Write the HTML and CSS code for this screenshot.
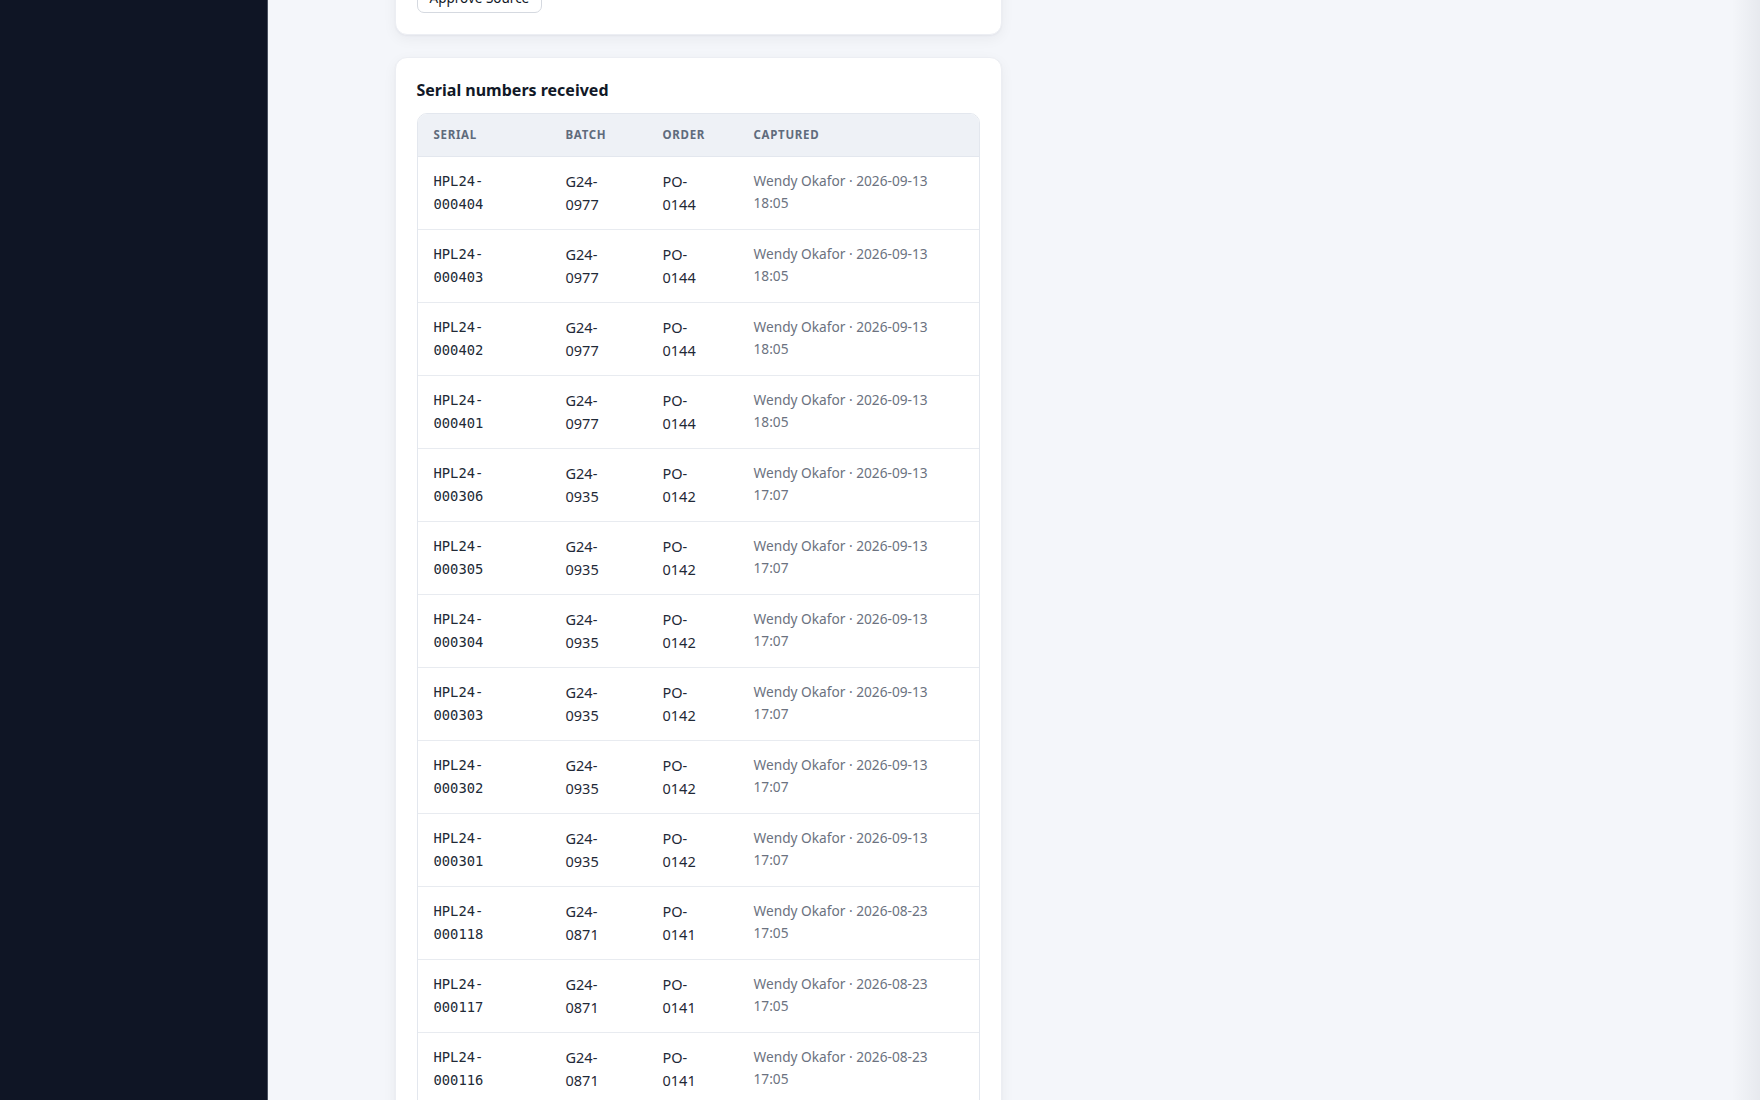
FILE: index.html
```html
<!DOCTYPE html>
<html lang="en">
<head>
<meta charset="utf-8">
<title>Serial numbers received</title>
<link rel="stylesheet" href="styles.css">
</head>
<body>
<div class="app">
  <aside class="sidebar"></aside>
  <main class="main">
    <div class="container">
      <div class="column">
        <section class="card card-actions">
          <button class="btn" type="button">Approve Source</button>
        </section>
        <section class="card">
          <h2 class="card-title">Serial numbers received</h2>
          <div class="table-wrap">
            <table class="serials">
              <colgroup>
                <col class="c-serial">
                <col class="c-batch">
                <col class="c-order">
                <col class="c-captured">
              </colgroup>
              <thead>
                <tr><th>Serial</th><th>Batch</th><th>Order</th><th>Captured</th></tr>
              </thead>
              <tbody>
                <tr><td class="mono"><span class="stack">HPL24-<wbr>000404</span></td><td><span class="stack">G24-<wbr>0977</span></td><td><span class="stack">PO-<wbr>0144</span></td><td class="meta">Wendy Okafor · 2026-09-13 18:05</td></tr>
                <tr><td class="mono"><span class="stack">HPL24-<wbr>000403</span></td><td><span class="stack">G24-<wbr>0977</span></td><td><span class="stack">PO-<wbr>0144</span></td><td class="meta">Wendy Okafor · 2026-09-13 18:05</td></tr>
                <tr><td class="mono"><span class="stack">HPL24-<wbr>000402</span></td><td><span class="stack">G24-<wbr>0977</span></td><td><span class="stack">PO-<wbr>0144</span></td><td class="meta">Wendy Okafor · 2026-09-13 18:05</td></tr>
                <tr><td class="mono"><span class="stack">HPL24-<wbr>000401</span></td><td><span class="stack">G24-<wbr>0977</span></td><td><span class="stack">PO-<wbr>0144</span></td><td class="meta">Wendy Okafor · 2026-09-13 18:05</td></tr>
                <tr><td class="mono"><span class="stack">HPL24-<wbr>000306</span></td><td><span class="stack">G24-<wbr>0935</span></td><td><span class="stack">PO-<wbr>0142</span></td><td class="meta">Wendy Okafor · 2026-09-13 17:07</td></tr>
                <tr><td class="mono"><span class="stack">HPL24-<wbr>000305</span></td><td><span class="stack">G24-<wbr>0935</span></td><td><span class="stack">PO-<wbr>0142</span></td><td class="meta">Wendy Okafor · 2026-09-13 17:07</td></tr>
                <tr><td class="mono"><span class="stack">HPL24-<wbr>000304</span></td><td><span class="stack">G24-<wbr>0935</span></td><td><span class="stack">PO-<wbr>0142</span></td><td class="meta">Wendy Okafor · 2026-09-13 17:07</td></tr>
                <tr><td class="mono"><span class="stack">HPL24-<wbr>000303</span></td><td><span class="stack">G24-<wbr>0935</span></td><td><span class="stack">PO-<wbr>0142</span></td><td class="meta">Wendy Okafor · 2026-09-13 17:07</td></tr>
                <tr><td class="mono"><span class="stack">HPL24-<wbr>000302</span></td><td><span class="stack">G24-<wbr>0935</span></td><td><span class="stack">PO-<wbr>0142</span></td><td class="meta">Wendy Okafor · 2026-09-13 17:07</td></tr>
                <tr><td class="mono"><span class="stack">HPL24-<wbr>000301</span></td><td><span class="stack">G24-<wbr>0935</span></td><td><span class="stack">PO-<wbr>0142</span></td><td class="meta">Wendy Okafor · 2026-09-13 17:07</td></tr>
                <tr><td class="mono"><span class="stack">HPL24-<wbr>000118</span></td><td><span class="stack">G24-<wbr>0871</span></td><td><span class="stack">PO-<wbr>0141</span></td><td class="meta">Wendy Okafor · 2026-08-23 17:05</td></tr>
                <tr><td class="mono"><span class="stack">HPL24-<wbr>000117</span></td><td><span class="stack">G24-<wbr>0871</span></td><td><span class="stack">PO-<wbr>0141</span></td><td class="meta">Wendy Okafor · 2026-08-23 17:05</td></tr>
                <tr><td class="mono"><span class="stack">HPL24-<wbr>000116</span></td><td><span class="stack">G24-<wbr>0871</span></td><td><span class="stack">PO-<wbr>0141</span></td><td class="meta">Wendy Okafor · 2026-08-23 17:05</td></tr>
                <tr><td class="mono"><span class="stack">HPL24-<wbr>000115</span></td><td><span class="stack">G24-<wbr>0871</span></td><td><span class="stack">PO-<wbr>0141</span></td><td class="meta">Wendy Okafor · 2026-08-23 17:05</td></tr>
              </tbody>
            </table>
          </div>
        </section>
      </div>
      <div class="column"></div>
    </div>
  </main>
</div>
</body>
</html>
```

FILE: styles.css
```css
html, body {
  margin: 0;
  padding: 0;
}

body {
  background: #f4f6fa;
  font-family: "Noto Sans", "Open Sans", "Liberation Sans", Arial, sans-serif;
  font-size: 14px;
  color: #1f2937;
}

body::after {
  content: "";
  position: fixed;
  top: 0;
  right: 0;
  bottom: 0;
  width: 28px;
  background: linear-gradient(to right, rgba(15, 23, 42, 0), rgba(15, 23, 42, 0.055));
  pointer-events: none;
}

.app {
  display: flex;
  height: 100vh;
  overflow: hidden;
}

.sidebar {
  width: 267px;
  flex-shrink: 0;
  background: #0f1525;
  border-right: 1px solid #4a5160;
}

.main {
  flex: 1;
  min-width: 0;
  padding: 0 32px 0 35px;
  overflow: hidden;
}

.container {
  max-width: 1242px;
  margin: -42px auto 0;
  display: grid;
  grid-template-columns: 1fr 1fr;
  column-gap: 28px;
  align-items: start;
}

.column {
  display: flex;
  flex-direction: column;
  gap: 22px;
}

.card {
  background: #ffffff;
  border: 1px solid #eceef3;
  border-radius: 12px;
  padding: 21px;
  box-shadow: 0 1px 2px rgba(16, 24, 40, 0.04), 0 4px 14px rgba(16, 24, 40, 0.05);
}

.card-actions {
  display: flex;
}

.btn {
  font-family: "Noto Sans", "Open Sans", "Liberation Sans", Arial, sans-serif;
  font-size: 13.5px;
  line-height: 20px;
  color: #111827;
  background: #ffffff;
  border: 1px solid #d5d9e0;
  border-radius: 7px;
  padding: 7px 12px 4px;
  cursor: pointer;
}

.card-title {
  margin: 0 0 12px;
  font-size: 16px;
  line-height: 22px;
  font-weight: 700;
  color: #111827;
}

.table-wrap {
  border: 1px solid #e3e7ee;
  border-radius: 10px;
  overflow: hidden;
}

.serials {
  width: 100%;
  border-collapse: collapse;
  table-layout: fixed;
}

.c-serial { width: 132px; }
.c-batch { width: 97px; }
.c-order { width: 91px; }

.serials th {
  background: #eef1f6;
  color: #5f6b7c;
  font-size: 11.5px;
  font-weight: 700;
  letter-spacing: 0.06em;
  text-transform: uppercase;
  text-align: left;
  line-height: 20px;
  padding: 11px 16px;
  border-bottom: 1px solid #e3e7ee;
}

.serials td {
  vertical-align: top;
  text-align: left;
  padding: 13px 16px;
  font-size: 14.5px;
  line-height: 23px;
  color: #1f2937;
  border-bottom: 1px solid #e8ebf0;
}

.serials tbody tr:last-child td {
  border-bottom: none;
}

.stack {
  display: inline-block;
  width: min-content;
}

.serials td.mono {
  font-family: "DejaVu Sans Mono", "Liberation Mono", monospace;
  font-size: 13.8px;
  color: #222a36;
}

.serials td.meta {
  font-size: 13.7px;
  line-height: 21.5px;
  color: #6b7280;
  padding-right: 24px;
}
```
